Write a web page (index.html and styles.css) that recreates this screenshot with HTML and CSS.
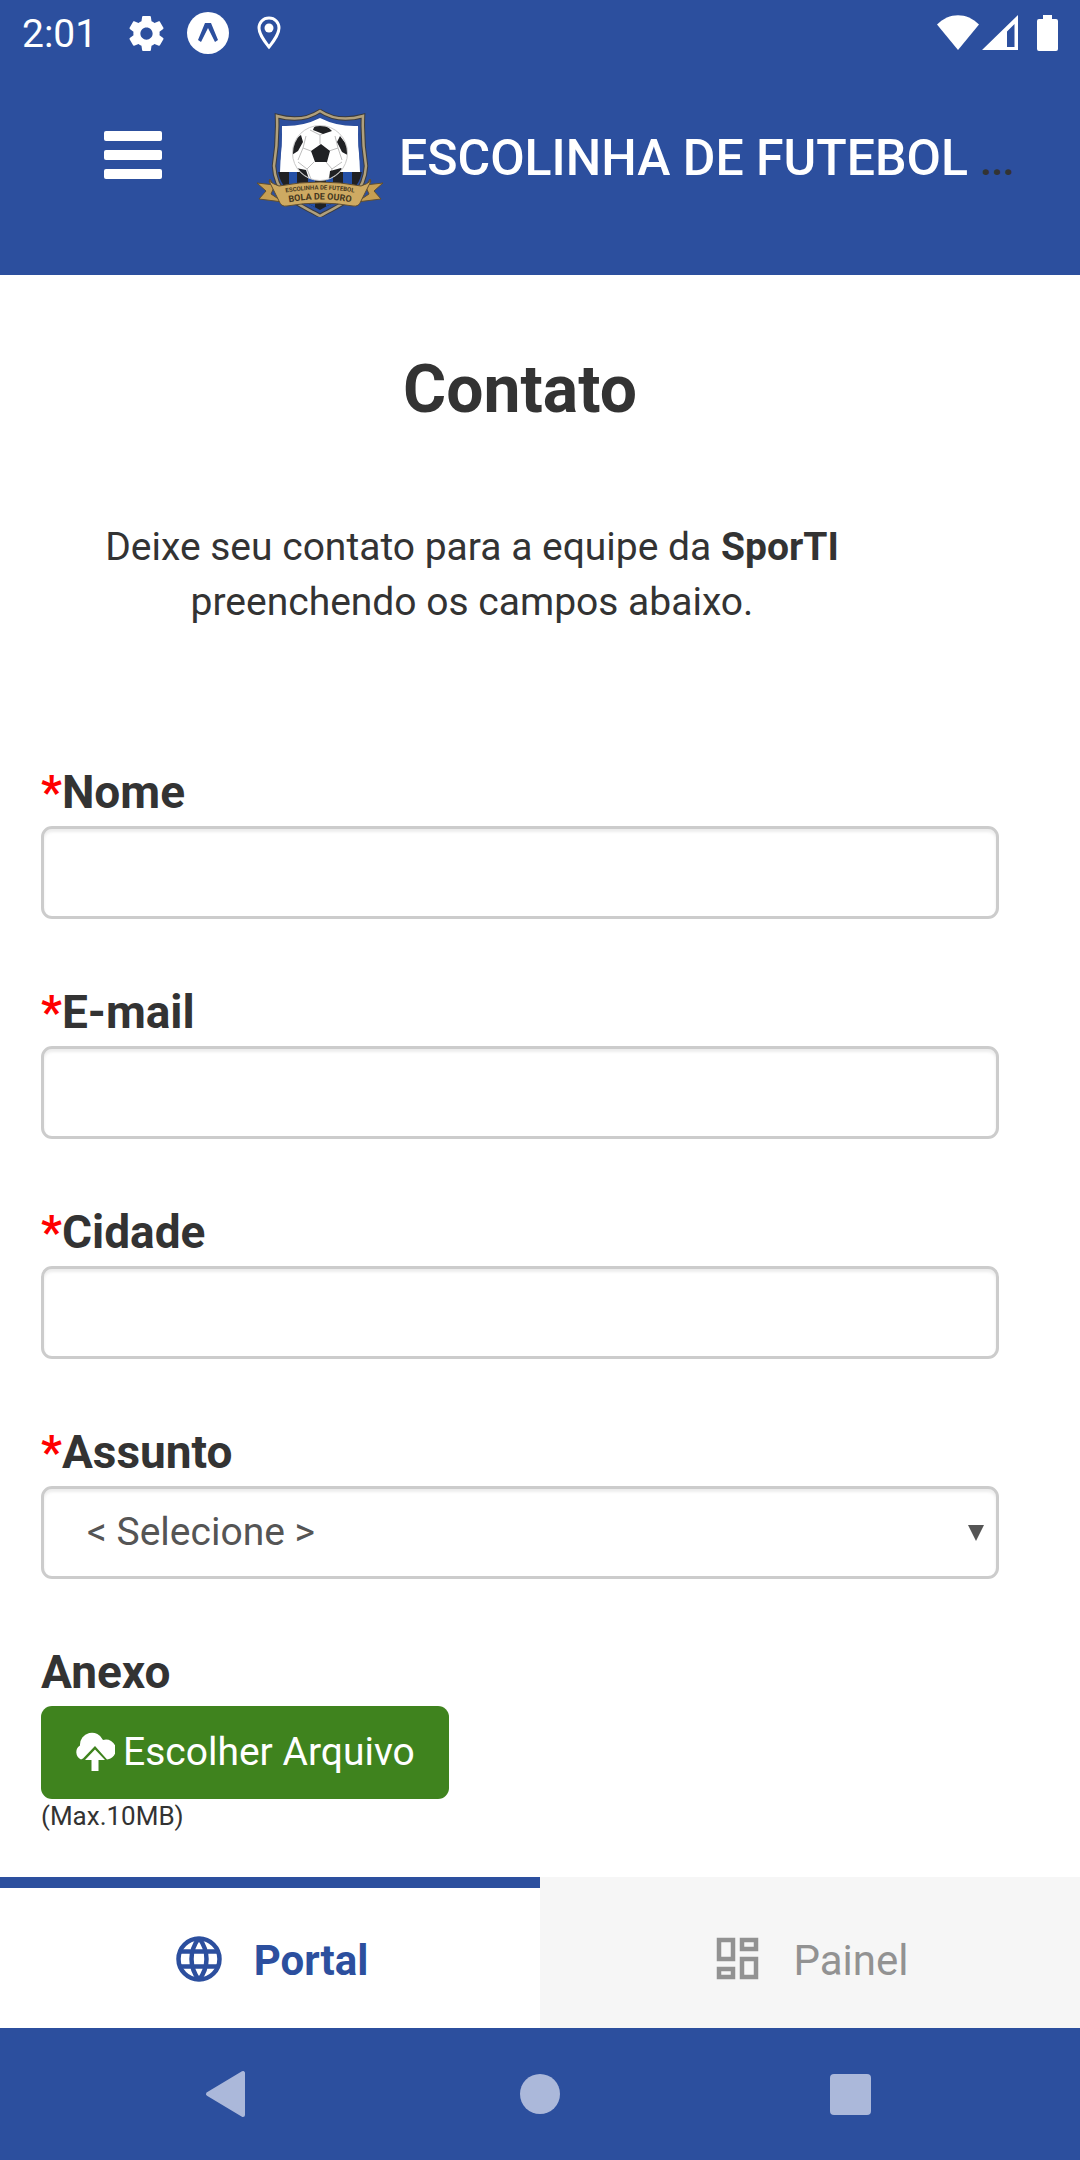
FILE: index.html
```
<!DOCTYPE html>
<html lang="pt-BR">
<head>
<meta charset="utf-8">
<meta name="viewport" content="width=device-width, initial-scale=1">
<title>Contato</title>
<link rel="stylesheet" href="styles.css">
</head>
<body>
<div class="status">
  <span class="clock">2:01</span>
  <div class="notices">
    <svg class="gear" viewBox="2 2 20 20" aria-hidden="true"><path fill="currentColor" d="M19.43 12.98c.04-.32.07-.64.07-.98s-.03-.66-.07-.98l2.11-1.65c.19-.15.24-.42.12-.64l-2-3.46c-.12-.22-.39-.3-.61-.22l-2.49 1c-.52-.4-1.08-.73-1.69-.98l-.38-2.65C14.46 2.18 14.25 2 14 2h-4c-.25 0-.46.18-.49.42l-.38 2.65c-.61.25-1.17.59-1.69.98l-2.49-1c-.23-.09-.49 0-.61.22l-2 3.46c-.13.22-.07.49.12.64l2.11 1.65c-.04.32-.07.65-.07.98s.03.66.07.98l-2.11 1.65c-.19.15-.24.42-.12.64l2 3.46c.12.22.39.3.61.22l2.49-1c.52.4 1.08.73 1.69.98l.38 2.65c.03.24.24.42.49.42h4c.25 0 .46-.18.49-.42l.38-2.65c.61-.25 1.17-.59 1.69-.98l2.49 1c.23.09.49 0 .61-.22l2-3.46c.12-.22.07-.49-.12-.64l-2.11-1.65zM12 15.5c-1.93 0-3.5-1.57-3.5-3.5s1.570-3.500 3.500-3.500 3.500 1.570 3.500 3.500-1.570 3.500-3.500 3.500z"/></svg>
    <svg class="expo" viewBox="0 0 42 42" aria-hidden="true"><circle cx="21" cy="21" r="21" fill="currentColor"/><path d="M18 11h6l7 17-3 2-7-14-7 14-3-2z" fill="#2c4f9e"/></svg>
    <svg class="pin" viewBox="0 0 24 34" aria-hidden="true"><path d="M12 2C6 2 2 6.500 2 12c0 7 10 19 10 19s10-12 10-19c0-5.500-4-10-10-10z" fill="none" stroke="currentColor" stroke-width="3"/><circle cx="12" cy="12" r="4.500" fill="currentColor"/></svg>
  </div>
  <div class="signals">
    <svg class="wifi" viewBox="0 0 42 36" aria-hidden="true"><path fill="currentColor" d="M0 9.500C12-3 30-3 42 9.500L21 35z"/></svg>
    <svg class="cell" viewBox="0 0 36 36" aria-hidden="true"><path fill="currentColor" fill-rule="evenodd" d="M36 0v35H0zM32.500 9L25 16.500V32h7.500z"/></svg>
    <svg class="battery" viewBox="0 0 21 36" aria-hidden="true"><path fill="currentColor" d="M6 0h9v4h4q2 0 2 2v28q0 2-2 2H2q-2 0-2-2V6q0-2 2-2h4z"/></svg>
  </div>
</div>

<header class="topbar">
  <button class="menu" type="button" aria-label="Menu"><svg viewBox="0 0 58 48" aria-hidden="true"><g fill="currentColor"><rect width="58" height="10" rx="2"/><rect y="19" width="58" height="10" rx="2"/><rect y="38" width="58" height="10" rx="2"/></g></svg></button>
  <svg class="crest" viewBox="17 18 126 108" role="img" aria-label="Bola de Ouro">
    <defs>
      <clipPath id="shield"><path d="M41 30q22 3 39-9q17 12 39 9q-3 25 3 50c-3 22-23 28-42 39c-19-11-39-17-42-39q6-25 3-50z"/></clipPath>
      <clipPath id="ball"><circle cx="80" cy="62" r="27"/></clipPath>
      <path id="arc1" d="M46 101.500q34-6 68 0"/>
      <path id="arc2" d="M50 111q30-5 60 0"/>
    </defs>
    <path d="M80 20Q62 32 37 25Q38 50 34 75C36 108 60 113 80 125C100 113 124 108 126 75Q122 50 123 25Q98 32 80 20z" fill="#2c4f9e" stroke="#3c3b3b" stroke-width="4.500"/>
    <path d="M80 20Q62 32 37 25Q38 50 34 75C36 108 60 113 80 125C100 113 124 108 126 75Q122 50 123 25Q98 32 80 20z" fill="none" stroke="#b0a07d" stroke-width="2.500"/>
    <g clip-path="url(#shield)">
      <path d="M42 35q20 1 38-8q18 9 38 8l2 46H40z" fill="#fff"/>
      <path d="M37 81h86v42H37z" fill="#202124"/>
      <path d="M49 81h8v40h-8zM68 81h7v40h-7zM86 81h7v40h-7zM103 81h9v40h-9z" fill="#2450a7"/>
    </g>
    <circle cx="80" cy="62" r="27.500" fill="#fff" stroke="#c9c9c9"/>
    <g clip-path="url(#ball)">
      <path d="M80 53v-9M89 60l9-3M86 71l6 7M74 71l-7 7M71 60l-8-3M80 44l-10-5M80 44l10-5M98 57l-3-12M98 57l4 12M92 78l10-7M92 78l-3 9M67 78l-9-7M67 78l4 10M63 57l3-12M63 57l-5 12" fill="none" stroke="#bdbdbd"/>
      <path d="M81 53l9 7-3 11H75l-4-11zM73 39q1-5 7-5 7 0 12 6l-9 3zM52 64V50l9-6 2 7-5 9zM97 51l3-6 9 12v8l-7-4zM56 77l10 2 3 9-8 6-8-8zM90 80l11-3 6 7-10 10-8-5z" fill="#202124"/>
    </g>
    <path d="M17 92l18 2-4 9 12 8-24-3 7-8zM143 92l-18 2 4 9-12 8 24-3-7-8z" fill="#c79f52" stroke="#604e30"/>
    <path d="M30 88q-3 4 6 7l2 7zM130 88q3 4-6 7l-2 7z" fill="#8d6d34" stroke="#604e30"/>
    <path d="M29 90l10 20q2 6 8 5 33-6 66 0 6 1 8-5l10-20q-4 3-10 5-41-8-82 0-6-2-10-5z" fill="#ceaa62" stroke="#604e30"/>
    <g class="crest-text"><text class="crest-small"><textPath href="#arc1" startOffset="50%">ESCOLINHA DE FUTEBOL</textPath></text><text class="crest-large"><textPath href="#arc2" startOffset="50%">BOLA DE OURO</textPath></text></g>
  </svg>
  <div class="brand">ESCOLINHA DE FUTEBOL <span class="more">...</span></div>
</header>

<main class="content">
  <h1>Contato</h1>
  <p class="intro">Deixe seu contato para a equipe da <strong>SporTI</strong> preenchendo os campos abaixo.</p>
  <form class="form">
    <div class="field">
      <label for="nome"><span class="required">*</span>Nome</label>
      <input class="control" id="nome" type="text">
    </div>
    <div class="field">
      <label for="email"><span class="required">*</span>E-mail</label>
      <input class="control" id="email" type="email">
    </div>
    <div class="field">
      <label for="cidade"><span class="required">*</span>Cidade</label>
      <input class="control" id="cidade" type="text">
    </div>
    <div class="field">
      <label for="assunto"><span class="required">*</span>Assunto</label>
      <div class="picker">
        <select class="control" id="assunto"><option>&lt; Selecione &gt;</option></select>
        <svg class="caret" viewBox="0 0 16 16" aria-hidden="true"><path d="M0 0h16L8 16z" fill="currentColor"/></svg>
      </div>
    </div>
    <div class="field">
      <label for="anexo">Anexo</label>
      <div class="attach">
        <button class="upload" id="anexo" type="button">
          <svg viewBox="0 0 40 40" aria-hidden="true"><path fill="currentColor" d="M6 27.500A8 8 0 0 1 5 13.500 12 12 0 0 1 28 8a10 10 0 1 1 4 19.500L20 14 8 26.500z"/><path fill="currentColor" d="M20 17.500l10 10.500h-6.500v11h-7V28H10z"/></svg>
          <span>Escolher Arquivo</span>
        </button>
        <small>(Max.10MB)</small>
      </div>
    </div>
  </form>
</main>

<nav class="tabs">
  <a class="tab active" href="#portal">
    <svg viewBox="0 0 46 46" aria-hidden="true"><g fill="none" stroke="currentColor" stroke-width="4.500"><circle cx="23" cy="23" r="20.500"/><path d="M4 15.500h38M4 30.500h38M23 2c-10 13-10 29 0 42M23 2c10 13 10 29 0 42"/></g></svg>
    <span>Portal</span>
  </a>
  <a class="tab" href="#painel">
    <svg viewBox="-2 -2 46 46" aria-hidden="true"><g fill="none" stroke="currentColor" stroke-width="4.500"><path d="M2 2h14v19H2zM25 2h14v9H25zM2 31h14v8H2zM25 21h14v18H25z"/></g></svg>
    <span>Painel</span>
  </a>
</nav>

<nav class="system">
  <button type="button" aria-label="Voltar"><svg viewBox="0 0 48 48" aria-hidden="true"><path d="M3 24L38 3v42z" fill="currentColor" stroke="currentColor" stroke-width="4" stroke-linejoin="round"/></svg></button>
  <button type="button" aria-label="Início"><svg viewBox="0 0 48 48" aria-hidden="true"><circle cx="24" cy="24" r="20" fill="currentColor"/></svg></button>
  <button type="button" aria-label="Recentes"><svg viewBox="0 0 48 48" aria-hidden="true"><rect x="3" y="4" width="41" height="41" rx="4" fill="currentColor"/></svg></button>
</nav>
</body>
</html>
```
FILE: styles.css
```
* {
  box-sizing: border-box;
}

:root {
  --blue: #2c4f9e;
  --ink: #333;
}

body {
  margin: 0;
  min-height: 100vh;
  display: flex;
  flex-direction: column;
  background: #fff;
  color: var(--ink);
  font-family: Roboto, "Liberation Sans", sans-serif;
  font-size: 39px;
}

svg {
  display: block;
  flex: none;
}

button,
input,
select {
  font: inherit;
  margin: 0;
}

button {
  border: 0;
  padding: 0;
  background: none;
}

.status {
  display: flex;
  align-items: center;
  height: 66px;
  padding: 0 22px;
  background: var(--blue);
  color: #fff;
}

.clock {
  width: 107px;
  padding-top: 2px;
  line-height: 40px;
}

.notices,
.signals {
  display: flex;
  align-items: center;
}

.notices {
  gap: 23px;
}

.signals {
  margin-left: auto;
}

.gear {
  width: 35px;
  height: 35px;
}

.expo {
  width: 42px;
  height: 42px;
}

.pin {
  width: 34px;
  height: 34px;
}

.wifi {
  width: 42px;
  height: 36px;
}

.cell {
  width: 36px;
  height: 36px;
  margin: 0 19px 0 3px;
}

.battery {
  width: 21px;
  height: 36px;
}

.topbar {
  display: flex;
  align-items: center;
  height: 209px;
  padding: 0 40px 16px 104px;
  background: var(--blue);
  color: #fff;
}

.menu {
  color: inherit;
  margin: 0 95px 16px 0;
}

.menu svg {
  width: 58px;
  height: 48px;
}

.crest {
  width: 126px;
  height: 108px;
}

.crest-text {
  font-weight: 700;
  text-anchor: middle;
  fill: #433620;
}

.crest-small {
  font-size: 6px;
}

.crest-large {
  font-size: 9px;
}

.brand {
  min-width: 0;
  margin-left: 16px;
  padding-bottom: 6px;
  overflow: hidden;
  white-space: nowrap;
  font-size: 50px;
  font-weight: 500;
  line-height: 64px;
}

.more {
  color: var(--ink);
  font-size: 39px;
  font-weight: 700;
}

.content {
  flex: 1;
  padding: 79px 81px 40px 41px;
}

h1 {
  margin: 0 0 94px;
  font-size: 66px;
  line-height: 72px;
  text-align: center;
}

.intro {
  margin: 0 0 135px;
  padding-right: 96px;
  line-height: 55px;
  text-align: center;
}

.form {
  display: flex;
  flex-direction: column;
  gap: 66px;
}

.field {
  display: flex;
  flex-direction: column;
  gap: 7px;
}

label {
  font-size: 46px;
  font-weight: 700;
  line-height: 54px;
}

.required {
  color: #f00;
}

.control {
  width: 100%;
  height: 93px;
  padding: 0 43px 2px;
  border: 3px solid #ccc;
  border-radius: 11px;
  background: #fff;
  box-shadow: inset 0 3px 3px rgba(0, 0, 0, 0.075);
  color: #555;
  appearance: none;
}

.picker {
  display: grid;
  align-items: center;
  color: #555;
}

.picker > * {
  grid-area: 1 / 1;
}

.caret {
  width: 16px;
  height: 16px;
  margin-right: 15px;
  justify-self: end;
  pointer-events: none;
}

.attach {
  display: flex;
  flex-direction: column;
  align-items: flex-start;
}

.upload {
  display: flex;
  align-items: center;
  gap: 8px;
  height: 93px;
  padding: 0 34px 2px;
  border-radius: 11px;
  background: #3f831e;
  color: #fff;
}

.upload svg {
  width: 40px;
  height: 40px;
}

small {
  font-size: 26px;
  line-height: 34px;
}

.tabs {
  display: grid;
  grid-template-columns: 1fr 1fr;
}

.tab {
  display: flex;
  align-items: center;
  justify-content: center;
  gap: 32px;
  height: 151px;
  padding: 13px 0 0 4px;
  background: #f6f6f6;
  color: #929292;
  font-size: 42px;
  text-decoration: none;
}

.tab span {
  padding-top: 2px;
}

.tab svg {
  width: 46px;
  height: 46px;
}

.active {
  padding-top: 2px;
  border-top: 11px solid var(--blue);
  background: #fff;
  color: var(--blue);
  font-weight: 700;
}

.system {
  display: grid;
  grid-template-columns: repeat(3, 1fr);
  align-items: center;
  justify-items: center;
  height: 132px;
  padding: 0 74px;
  background: var(--blue);
}

.system button {
  color: #abb8da;
}

.system svg {
  width: 48px;
  height: 48px;
}
```
